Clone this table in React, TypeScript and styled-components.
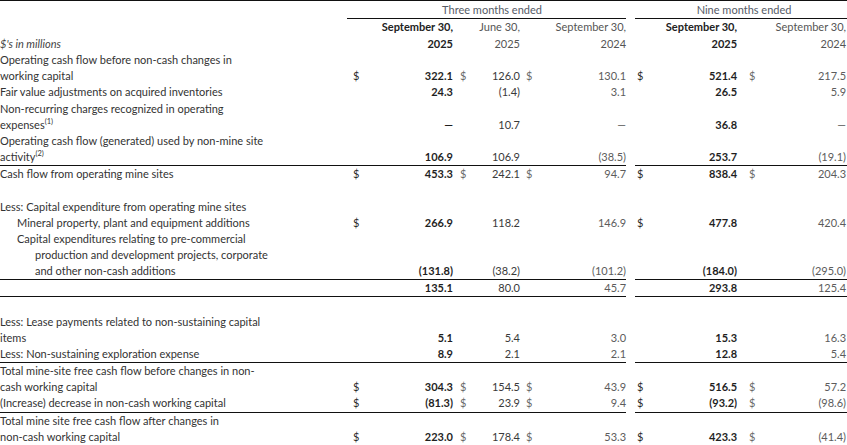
import React from 'react';
import styled, { createGlobalStyle } from 'styled-components';

type Cell = { v: string; d?: boolean };
type Row = {
  lines: string[];
  sup?: string;
  indent?: number;
  hang?: number;
  values?: Cell[];
  rule?: boolean;
};

const c = (v: string, d = false): Cell => ({ v, d });

const rows: Row[] = [
  {
    lines: ['Operating cash flow before non-cash changes in', 'working capital'],
    values: [c('322.1', true), c('126.0', true), c('130.1', true), c('521.4', true), c('217.5', true)],
  },
  {
    lines: ['Fair value adjustments on acquired inventories'],
    values: [c('24.3'), c('(1.4)'), c('3.1'), c('26.5'), c('5.9')],
  },
  {
    lines: ['Non-recurring charges recognized in operating', 'expenses'],
    sup: '(1)',
    values: [c('—'), c('10.7'), c('—'), c('36.8'), c('—')],
  },
  {
    lines: ['Operating cash flow (generated) used by non-mine site', 'activity'],
    sup: '(2)',
    values: [c('106.9'), c('106.9'), c('(38.5)'), c('253.7'), c('(19.1)')],
    rule: true,
  },
  {
    lines: ['Cash flow from operating mine sites'],
    values: [c('453.3', true), c('242.1', true), c('94.7', true), c('838.4', true), c('204.3', true)],
  },
  { lines: [''] },
  { lines: ['Less: Capital expenditure from operating mine sites'] },
  {
    lines: ['Mineral property, plant and equipment additions'],
    indent: 17,
    values: [c('266.9', true), c('118.2'), c('146.9'), c('477.8', true), c('420.4')],
  },
  {
    lines: [
      'Capital expenditures relating to pre-commercial',
      'production and development projects, corporate',
      'and other non-cash additions',
    ],
    indent: 17,
    hang: 35,
    values: [c('(131.8)'), c('(38.2)'), c('(101.2)'), c('(184.0)'), c('(295.0)')],
    rule: true,
  },
  {
    lines: [''],
    values: [c('135.1'), c('80.0'), c('45.7'), c('293.8'), c('125.4')],
    rule: true,
  },
  { lines: [''] },
  {
    lines: ['Less: Lease payments related to non-sustaining capital', 'items'],
    values: [c('5.1'), c('5.4'), c('3.0'), c('15.3'), c('16.3')],
  },
  {
    lines: ['Less: Non-sustaining exploration expense'],
    values: [c('8.9'), c('2.1'), c('2.1'), c('12.8'), c('5.4')],
    rule: true,
  },
  {
    lines: ['Total mine-site free cash flow before changes in non-', 'cash working capital'],
    values: [c('304.3', true), c('154.5', true), c('43.9', true), c('516.5', true), c('57.2', true)],
  },
  {
    lines: ['(Increase) decrease in non-cash working capital'],
    values: [c('(81.3)', true), c('23.9', true), c('9.4', true), c('(93.2)', true), c('(98.6)', true)],
    rule: true,
  },
  {
    lines: ['Total mine site free cash flow after changes in', 'non-cash working capital'],
    values: [c('223.0', true), c('178.4', true), c('53.3', true), c('423.3', true), c('(41.4)', true)],
    rule: true,
  },
];

// per amount column: left pad of the $ sign, right pad of the figure, tone
const columns = [
  { pad: 6, end: 0, bold: true, tone: '#1f1f1f', sign: '#2a2a2a' },
  { pad: 7, end: 0, bold: false, tone: '#3a3a3a', sign: '#6a6a6a' },
  { pad: 6, end: 0, bold: false, tone: '#5c5c5c', sign: '#6a6a6a' },
  { pad: 2, end: 0, bold: true, tone: '#1f1f1f', sign: '#2a2a2a' },
  { pad: 12, end: 1, bold: false, tone: '#5c5c5c', sign: '#6a6a6a' },
];

const headers = [
  { top: 'September 30,', year: '2025' },
  { top: 'June 30,', year: '2025' },
  { top: 'September 30,', year: '2024' },
  { top: 'September 30,', year: '2025' },
  { top: 'September 30,', year: '2024' },
];

const GlobalStyle = createGlobalStyle`
  html, body {
    margin: 0;
    padding: 0;
    background: #ffffff;
  }
  body {
    font-family: Lato, "Liberation Sans", sans-serif;
    -webkit-font-smoothing: antialiased;
  }
`;

const Table = styled.table`
  width: 847px;
  table-layout: fixed;
  border-collapse: collapse;
  border-top: 1px solid #111;
  font-size: 11px;
  line-height: 16.15px;
  color: #333;
`;

const Ruled = styled.tr<{ $rule?: boolean }>`
  & > td {
    border-bottom: ${(p) => (p.$rule ? '1px solid #111' : 'none')};
  }
  & > td.gap {
    border-bottom: none;
  }
`;

const Group = styled.th<{ $shift: number }>`
  padding: 1px 0 0 ${(p) => p.$shift}px;
  font-weight: 400;
  color: #555b66;
  text-align: center;
  border-bottom: 1px solid #111;
  height: 16px;
`;

const Gap = styled.td`
  padding: 0;
`;

const Units = styled.th`
  padding: 0;
  line-height: 16.5px;
  text-align: left;
  vertical-align: bottom;
  font-weight: 400;
  font-style: italic;
  color: #444;
`;

const DateHead = styled.th<{ $bold: boolean; $end: number; $tone: string }>`
  padding: 0 ${(p) => p.$end}px 0 0;
  line-height: 16.5px;
  text-align: right;
  vertical-align: bottom;
  font-weight: ${(p) => (p.$bold ? 700 : 400)};
  color: ${(p) => p.$tone};
`;

const Label = styled.td`
  padding: 0;
  vertical-align: bottom;
  color: #333;
`;

const LabelLine = styled.div<{ $indent: number }>`
  padding-left: ${(p) => p.$indent}px;
  white-space: nowrap;
  min-height: 16.15px;
`;

const Sup = styled.sup`
  font-size: 7.5px;
  line-height: 0;
  vertical-align: 5px;
`;

const Amount = styled.td<{ $end: number }>`
  padding: 0 ${(p) => p.$end}px 0 0;
  vertical-align: bottom;
`;

const Pair = styled.div`
  display: flex;
  justify-content: space-between;
  align-items: flex-end;
`;

const Sign = styled.span<{ $pad: number; $tone: string }>`
  padding-left: ${(p) => p.$pad}px;
  color: ${(p) => p.$tone};
`;

const Figure = styled.span<{ $bold: boolean; $tone: string }>`
  font-weight: ${(p) => (p.$bold ? 700 : 400)};
  color: ${(p) => p.$tone};
`;

const App = () => (
  <>
    <GlobalStyle />
    <Table>
      <colgroup>
        <col style={{ width: 347 }} />
        <col style={{ width: 106 }} />
        <col style={{ width: 67 }} />
        <col style={{ width: 106 }} />
        <col style={{ width: 9 }} />
        <col style={{ width: 102 }} />
        <col style={{ width: 110 }} />
      </colgroup>
      <thead>
        <tr>
          <Gap />
          <Group colSpan={3} $shift={11}>Three months ended</Group>
          <Gap />
          <Group colSpan={2} $shift={6}>Nine months ended</Group>
        </tr>
        <Ruled $rule>
          <Units>$&apos;s in millions</Units>
          {headers.slice(0, 3).map((h, i) => (
            <DateHead key={i} $bold={columns[i].bold} $end={columns[i].end} $tone={columns[i].bold ? '#222' : '#555'}>
              {h.top}
              <br />
              {h.year}
            </DateHead>
          ))}
          <Gap className="gap" />
          {headers.slice(3).map((h, j) => {
            const i = j + 3;
            return (
              <DateHead key={i} $bold={columns[i].bold} $end={columns[i].end} $tone={columns[i].bold ? '#222' : '#555'}>
                {h.top}
                <br />
                {h.year}
              </DateHead>
            );
          })}
        </Ruled>
      </thead>
      <tbody>
        {rows.map((row, r) => {
          const cells = (row.values ?? []).map((cell, i) => {
            const col = columns[i];
            return (
              <Amount key={i} $end={col.end}>
                <Pair>
                  <Sign $pad={col.pad} $tone={col.sign}>{cell.d ? '$' : ''}</Sign>
                  <Figure $bold={col.bold} $tone={col.tone}>{cell.v}</Figure>
                </Pair>
              </Amount>
            );
          });
          while (cells.length < 5) cells.push(<Amount key={cells.length} $end={0} />);
          return (
            <Ruled key={r} $rule={row.rule}>
              <Label>
                {row.lines.map((line, k) => (
                  <LabelLine key={k} $indent={k > 0 && row.hang ? row.hang : row.indent ?? 0}>
                    {line}
                    {row.sup && k === row.lines.length - 1 && <Sup>{row.sup}</Sup>}
                  </LabelLine>
                ))}
              </Label>
              {cells.slice(0, 3)}
              <Gap className="gap" />
              {cells.slice(3)}
            </Ruled>
          );
        })}
      </tbody>
    </Table>
  </>
);

export default App;
